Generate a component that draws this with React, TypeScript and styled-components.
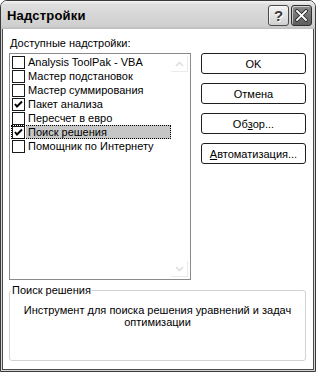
import React from 'react';
import styled, { createGlobalStyle } from 'styled-components';

const GlobalStyle = createGlobalStyle`
  html, body {
    margin: 0;
    padding: 0;
    background: #fff;
  }
`;

interface AddIn {
  name: string;
  checked: boolean;
}

const ADD_INS: AddIn[] = [
  { name: 'Analysis ToolPak - VBA', checked: false },
  { name: 'Мастер подстановок', checked: false },
  { name: 'Мастер суммирования', checked: false },
  { name: 'Пакет анализа', checked: true },
  { name: 'Пересчет в евро', checked: false },
  { name: 'Поиск решения', checked: true },
  { name: 'Помощник по Интернету', checked: false },
];

const SELECTED = 5;

const Window = styled.div`
  width: 316px;
  height: 372px;
  box-sizing: border-box;
  display: flex;
  flex-direction: column;
  border: 1px solid #3a3a3a;
  border-radius: 7px 7px 0 0;
  overflow: hidden;
  background: #fff;
  font-family: "Liberation Sans", Arial, sans-serif;
  font-size: 11px;
  color: #000;
`;

const TitleBar = styled.div`
  height: 28px;
  flex: none;
  display: flex;
  align-items: center;
  padding: 0 3px 0 6px;
  background: linear-gradient(to bottom, #f4f4f4 0%, #dedede 12%, #d6d6d6 50%, #d0d0d0 88%, #bdbdbd 100%);
`;

const Title = styled.div`
  flex: 1;
  font-weight: bold;
  font-size: 13px;
  letter-spacing: 0.2px;
`;

const CaptionButtons = styled.div`
  display: flex;
  gap: 2px;
`;

const CaptionButton = styled.div<{ $dark?: boolean }>`
  width: 21px;
  height: 21px;
  box-sizing: border-box;
  border: 1px solid ${p => (p.$dark ? '#2e2e2e' : '#4a4a4a')};
  border-radius: 3px;
  background: ${p =>
    p.$dark
      ? 'linear-gradient(to bottom, #8a8a8a, #5e5e5e)'
      : 'linear-gradient(to bottom, #f4f4f4, #cfcfcf)'};
  box-shadow: inset 1px 1px 0 rgba(255, 255, 255, 0.6);
  display: flex;
  align-items: center;
  justify-content: center;
  font-weight: bold;
  font-size: 15px;
  color: #3a3a3a;
  text-shadow: 1px 1px 0 #fff;
`;

const Body = styled.div`
  flex: 1;
  display: flex;
  flex-direction: column;
  padding: 8px 9px 10px 8px;
  box-shadow:
    inset 1px 0 0 #d6d6d6, inset -1px 0 0 #d6d6d6, inset 0 -1px 0 #d6d6d6,
    inset 2px 0 0 #4a4a4a, inset -2px 0 0 #4a4a4a, inset 0 -2px 0 #4a4a4a;
`;

const MainRow = styled.div`
  display: grid;
  grid-template-columns: 182px 105px;
  column-gap: 10px;
`;

const LeftColumn = styled.div`
  display: flex;
  flex-direction: column;
`;

const FieldLabel = styled.div`
  height: 13px;
  line-height: 13px;
  padding-left: 1px;
  margin-bottom: 3px;
`;

const ListBox = styled.div`
  height: 227px;
  box-sizing: border-box;
  border: 1px solid #8a8a8a;
  display: flex;
  background: #fff;
`;

const Items = styled.div`
  flex: 1;
  padding: 1px 0 0 1px;
  display: flex;
  flex-direction: column;
`;

const Item = styled.div<{ $focused?: boolean }>`
  height: 14px;
  display: flex;
  align-items: center;
  gap: 1px;
  padding-left: 1px;
  outline: ${p => (p.$focused ? '1px dotted #000' : 'none')};
  outline-offset: -1px;
`;

const CheckBox = styled.div`
  width: 13px;
  height: 13px;
  flex: none;
  box-sizing: border-box;
  border: 1px solid #1a1a1a;
  background: #fff;
  display: flex;
  align-items: center;
  justify-content: center;
`;

const ItemText = styled.span<{ $selected?: boolean }>`
  height: 14px;
  line-height: 14px;
  padding: 0 2px;
  white-space: nowrap;
  background: ${p => (p.$selected ? '#c6c6c6' : 'transparent')};
  flex: ${p => (p.$selected ? 1 : 'none')};
`;

const ScrollBar = styled.div`
  width: 17px;
  flex: none;
  display: flex;
  flex-direction: column;
  justify-content: space-between;
  padding: 2px 2px 2px 0;
`;

const ScrollButton = styled.div`
  height: 16px;
  box-sizing: border-box;
  border-right: 1px solid #ebebeb;
  border-bottom: 1px solid #ebebeb;
  display: flex;
  align-items: center;
  justify-content: center;
`;

const ButtonColumn = styled.div`
  display: flex;
  flex-direction: column;
  gap: 9px;
  padding-top: 16px;
`;

const DialogButton = styled.div`
  height: 21px;
  box-sizing: border-box;
  border: 1px solid #1e1e1e;
  border-radius: 3px;
  background: #fff;
  display: flex;
  align-items: center;
  justify-content: center;
`;

const GroupBox = styled.fieldset`
  flex: 1;
  margin: 4px 0 0;
  padding: 0 10px;
  border: 1px solid #d2d2d2;
  border-radius: 3px;
  min-width: 0;
`;

const GroupLegend = styled.legend`
  padding: 0 1px;
  margin-left: -9px;
  line-height: 13px;
`;

const Description = styled.div`
  padding-top: 7px;
  line-height: 12px;
  text-align: center;
`;

const CheckMark = () => (
  <svg width="9" height="9" viewBox="0 0 9 9">
    <polyline points="1,4 3,6.5 8,1.5" fill="none" stroke="#000" strokeWidth="2" />
  </svg>
);

const Chevron = ({ up }: { up?: boolean }) => (
  <svg width="9" height="6" viewBox="0 0 9 6">
    <polyline
      points={up ? '1,5 4.5,1.5 8,5' : '1,1 4.5,4.5 8,1'}
      fill="none"
      stroke="#dedede"
      strokeWidth="1.6"
    />
  </svg>
);

const CloseGlyph = () => (
  <svg width="13" height="13" viewBox="0 0 13 13">
    <path d="M2 2 L11 11 M11 2 L2 11" stroke="#2a2a2a" strokeWidth="3.6" strokeLinecap="square" />
    <path d="M2 2 L11 11 M11 2 L2 11" stroke="#fff" strokeWidth="1.8" strokeLinecap="square" />
  </svg>
);

export default function App() {
  return (
    <>
      <GlobalStyle />
      <Window>
        <TitleBar>
          <Title>Надстройки</Title>
          <CaptionButtons>
            <CaptionButton>?</CaptionButton>
            <CaptionButton $dark>
              <CloseGlyph />
            </CaptionButton>
          </CaptionButtons>
        </TitleBar>
        <Body>
          <MainRow>
            <LeftColumn>
              <FieldLabel>
                <u>Д</u>оступные надстройки:
              </FieldLabel>
              <ListBox>
                <Items>
                  {ADD_INS.map((item, i) => (
                    <Item key={item.name} $focused={i === SELECTED}>
                      <CheckBox>{item.checked && <CheckMark />}</CheckBox>
                      <ItemText $selected={i === SELECTED}>{item.name}</ItemText>
                    </Item>
                  ))}
                </Items>
                <ScrollBar>
                  <ScrollButton>
                    <Chevron up />
                  </ScrollButton>
                  <ScrollButton>
                    <Chevron />
                  </ScrollButton>
                </ScrollBar>
              </ListBox>
            </LeftColumn>
            <ButtonColumn>
              <DialogButton>OK</DialogButton>
              <DialogButton>Отмена</DialogButton>
              <DialogButton>
                Об<u>з</u>ор...
              </DialogButton>
              <DialogButton>
                <u>А</u>втоматизация...
              </DialogButton>
            </ButtonColumn>
          </MainRow>
          <GroupBox>
            <GroupLegend>Поиск решения</GroupLegend>
            <Description>
              Инструмент для поиска решения уравнений и задач оптимизации
            </Description>
          </GroupBox>
        </Body>
      </Window>
    </>
  );
}
